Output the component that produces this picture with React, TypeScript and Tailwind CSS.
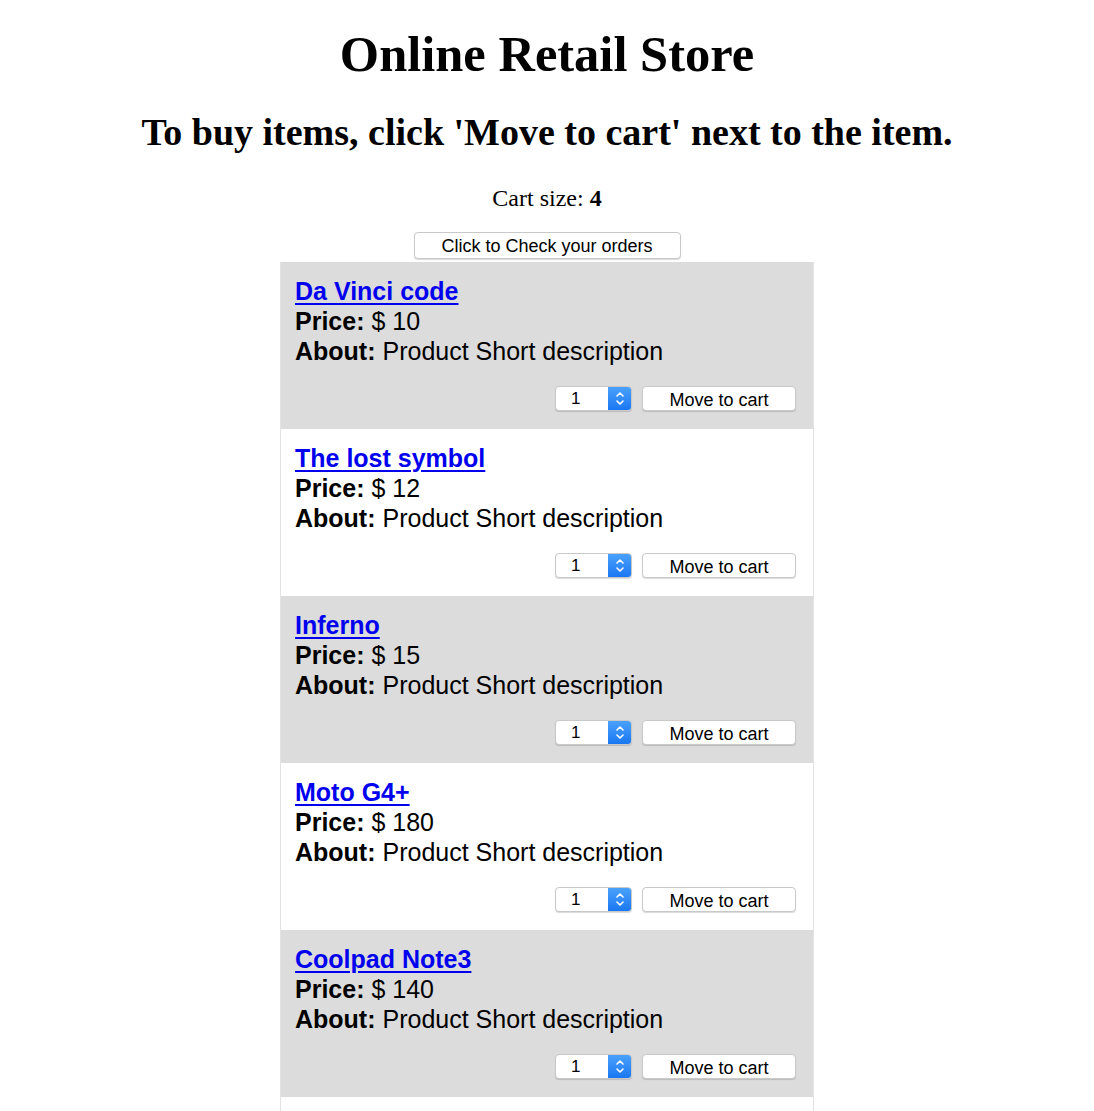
import React from "react";

const products = [
  { name: "Da Vinci code", price: 10 },
  { name: "The lost symbol", price: 12 },
  { name: "Inferno", price: 15 },
  { name: "Moto G4+", price: 180 },
  { name: "Coolpad Note3", price: 140 },
  { name: "Redmi Note 4", price: 150 },
];

function Spinner() {
  return (
    <div className="flex h-[25px] w-[77px] items-stretch overflow-hidden rounded-[4px] border border-[#c8c8c8] bg-white shadow-[0_1px_1px_rgba(0,0,0,0.15)]">
      <div className="flex flex-1 items-center pl-[15px] text-[17px] text-black" style={{ fontFamily: '"Liberation Sans", Arial, sans-serif' }}>
        1
      </div>
      <div className="flex w-[23px] items-center justify-center bg-gradient-to-b from-[#4aa1fb] to-[#1877f2]">
        <svg width="10" height="17" viewBox="0 0 10 17" fill="none" stroke="white" strokeWidth="1.6" strokeLinecap="round" strokeLinejoin="round">
          <path d="M2 6 L5 3 L8 6" />
          <path d="M2 11 L5 14 L8 11" />
        </svg>
      </div>
    </div>
  );
}

export default function App() {
  return (
    <div className="min-h-screen bg-white text-black">
      <h1
        className="mt-[27px] mb-0 text-center text-[50.5px] font-bold leading-[55px]"
        style={{ fontFamily: '"Liberation Serif", "Times New Roman", serif' }}
      >
        Online Retail Store
      </h1>
      <h2
        className="mt-[28px] text-center text-[38px] font-bold leading-[44px]"
        style={{ fontFamily: '"Liberation Serif", "Times New Roman", serif' }}
      >
        To buy items, click 'Move to cart' next to the item.
      </h2>
      <p
        className="mt-[30px] text-center text-[24px] leading-[28px]"
        style={{ fontFamily: '"Liberation Serif", "Times New Roman", serif' }}
      >
        Cart size: <b>4</b>
      </p>
      <div className="mt-[20px] flex justify-center">
        <button
          className="h-[27px] w-[267px] rounded-[4px] border border-[#c9c9c9] bg-white text-[18px] text-black shadow-[0_1px_1px_rgba(0,0,0,0.15)]"
          style={{ fontFamily: '"Liberation Sans", Arial, sans-serif' }}
        >
          Click to Check your orders
        </button>
      </div>
      <div
        className="mx-auto mt-[3px] w-[534px] border-x border-[#e3e3e3]"
        style={{ fontFamily: '"Liberation Sans", Arial, sans-serif' }}
      >
        {products.map((p, i) => (
          <div
            key={p.name}
            className={`flex h-[167px] flex-col px-[14px] pt-[15px] ${i % 2 === 0 ? "bg-[#dcdcdc]" : "bg-white"}`}
          >
            <a href="#" className="text-[25px] font-bold leading-[29px] text-[#0000ee] underline decoration-[2px] underline-offset-[3px]">
              {p.name}
            </a>
            <div className="text-[25px] leading-[30px]">
              <b>Price:</b> $ {p.price}
            </div>
            <div className="text-[25px] leading-[30px]">
              <b>About:</b> Product Short description
            </div>
            <div className="mt-[20px] flex justify-end gap-[10px] pr-[3px]">
              <Spinner />
              <button className="h-[25px] w-[154px] rounded-[4px] border border-[#c9c9c9] bg-white text-[18px] text-black shadow-[0_1px_1px_rgba(0,0,0,0.15)]">
                Move to cart
              </button>
            </div>
          </div>
        ))}
      </div>
    </div>
  );
}
